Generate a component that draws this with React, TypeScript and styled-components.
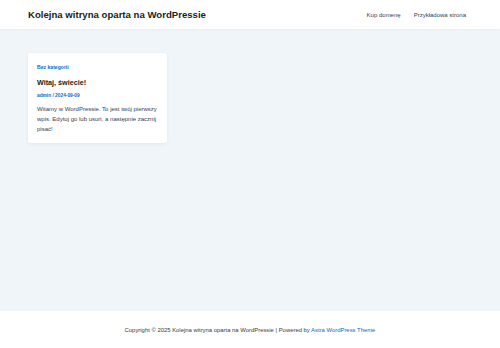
import React from 'react';
import styled, { createGlobalStyle } from 'styled-components';

const GlobalStyle = createGlobalStyle`
  html, body {
    margin: 0;
    padding: 0;
    background: #ffffff;
    font-family: "Liberation Sans", Arial, sans-serif;
  }
`;

const Page = styled.div`
  display: flex;
  flex-direction: column;
  width: 500px;
  height: 348px;
  background: #f0f5fa;
`;

const Header = styled.header`
  display: flex;
  align-items: center;
  justify-content: space-between;
  height: 29px;
  padding: 0 34px 0 28px;
  background: #ffffff;
  box-shadow: 0 1px 2px rgba(0, 0, 0, 0.03);
`;

const SiteTitle = styled.a`
  font-size: 9.6px;
  font-weight: 700;
  color: #222222;
  text-decoration: none;
`;

const Nav = styled.nav`
  display: flex;
  gap: 13px;
`;

const NavLink = styled.a`
  font-size: 6px;
  color: #334155;
  text-decoration: none;
`;

const Main = styled.main`
  flex: 1;
  padding: 24px 28px;
`;

const Card = styled.article`
  width: 123px;
  padding: 11px 7px 9px 9px;
  background: #ffffff;
  border-radius: 3px;
  box-shadow: 0 1px 4px rgba(0, 0, 0, 0.06);
`;

const Category = styled.a`
  display: block;
  font-size: 5.1px;
  font-weight: 700;
  color: #0a6bc8;
  text-decoration: none;
`;

const Title = styled.h2`
  margin: 8px 0 0;
  font-size: 7.2px;
  font-weight: 700;
  color: #222222;
`;

const Meta = styled.div`
  margin-top: 6px;
  font-size: 4.8px;
  font-weight: 700;
  color: #0a6bc8;
`;

const Excerpt = styled.p`
  margin: 6px 0 0;
  font-size: 6px;
  line-height: 10px;
  color: #334155;
`;

const Footer = styled.footer`
  display: flex;
  align-items: center;
  justify-content: center;
  height: 37px;
  background: #ffffff;
  font-size: 5.9px;
  color: #3a3a3a;
`;

const FooterLink = styled.a`
  color: #0a6bc8;
  text-decoration: none;
`;

export default function App() {
  return (
    <>
      <GlobalStyle />
      <Page>
        <Header>
          <SiteTitle href="#">Kolejna witryna oparta na WordPressie</SiteTitle>
          <Nav>
            <NavLink href="#">Kup domenę</NavLink>
            <NavLink href="#">Przykładowa strona</NavLink>
          </Nav>
        </Header>
        <Main>
          <Card>
            <Category href="#">Bez kategorii</Category>
            <Title>Witaj, świecie!</Title>
            <Meta>admin / 2024-09-09</Meta>
            <Excerpt>
              Witamy w WordPressie. To jest twój pierwszy wpis. Edytuj go lub usuń, a następnie zacznij pisać!
            </Excerpt>
          </Card>
        </Main>
        <Footer>
          <span>
            Copyright © 2025 Kolejna witryna oparta na WordPressie | Powered by{' '}
            <FooterLink href="#">Astra WordPress Theme</FooterLink>
          </span>
        </Footer>
      </Page>
    </>
  );
}
